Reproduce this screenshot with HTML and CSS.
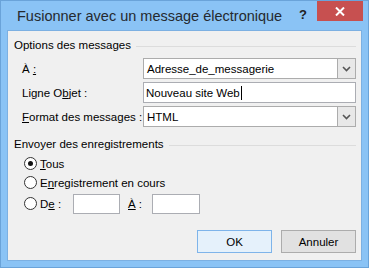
FILE: index.html
```html
<!DOCTYPE html>
<html>
<head>
  <meta charset="UTF-8">
  <title>Fusionner avec un message électronique</title>
  <link rel="stylesheet" href="styles.css">
</head>
<body>

  <div class="window">
    <div class="titlebar">
      <span class="title">Fusionner avec un message électronique</span>
      <span class="help">?</span>
      <span class="close">
        <svg width="10" height="9" viewBox="0 0 10 9"><path d="M1 0.5 L9 8.5 M9 0.5 L1 8.5" stroke="#fff" stroke-width="2"/></svg>
      </span>
    </div>

    <div class="client">
      <div class="legend"><span>Options des messages</span><span class="rule"></span></div>
      <div class="rows">
        <div class="row">
          <label class="label">À <u>:</u></label>
          <div class="combo">
            <span class="value">Adresse_de_messagerie</span>
            <span class="drop"><svg width="9" height="6" viewBox="0 0 9 6"><path d="M1 1 L4.5 4.5 L8 1" fill="none" stroke="#555" stroke-width="1.6"/></svg></span>
          </div>
        </div>
        <div class="row">
          <label class="label">Ligne O<u>b</u>jet :</label>
          <div class="textbox">Nouveau site Web<span class="caret"></span></div>
        </div>
        <div class="row">
          <label class="label"><u>F</u>ormat des messages :</label>
          <div class="combo">
            <span class="value">HTML</span>
            <span class="drop"><svg width="9" height="6" viewBox="0 0 9 6"><path d="M1 1 L4.5 4.5 L8 1" fill="none" stroke="#555" stroke-width="1.6"/></svg></span>
          </div>
        </div>
      </div>

      <div class="legend second"><span>Envoyer des enregistrements</span><span class="rule"></span></div>
      <div class="radios">
        <div class="radio-row"><span class="radio checked"></span><span><u>T</u>ous</span></div>
        <div class="radio-row"><span class="radio"></span><span>E<u>n</u>registrement en cours</span></div>
        <div class="radio-row range">
          <span class="radio"></span><span class="from-label">D<u>e</u> :</span>
          <span class="small-box"></span>
          <span class="to-label"><u>À</u> :</span>
          <span class="small-box wide"></span>
        </div>
      </div>

      <div class="buttons">
        <button class="btn default">OK</button>
        <button class="btn">Annuler</button>
      </div>
    </div>
  </div>

</body>
</html>
```

FILE: styles.css
```css
* {
  margin: 0;
  padding: 0;
  box-sizing: border-box;
}
body {
  font-family: 'Liberation Sans', Arial, sans-serif;
  font-size: 11.5px;
  color: #000;
  background: #8ac3f5;
}

.window {
  width: 369px;
  height: 268px;
  border: 1px solid #6aa3d9;
  background: #8ac3f5;
  padding: 0 6px 6px;
  display: flex;
  flex-direction: column;
}

.titlebar {
  height: 29px;
  display: flex;
  align-items: flex-start;
}
.title {
  margin-left: 10px;
  padding-top: 7px;
  font-size: 14.5px;
  line-height: 17px;
  color: #252a30;
  flex: 1;
}
.help {
  margin-top: 7px;
  margin-right: 10px;
  font-weight: bold;
  font-size: 13px;
  line-height: 14px;
  color: #222;
}
.close {
  width: 46px;
  height: 20px;
  margin-right: -1px;
  background: #c75050;
  display: flex;
  align-items: center;
  justify-content: center;
}

.client {
  flex: 1;
  border: 1px solid #7cb0e2;
  background: #f0f0f0;
  padding-top: 7px;
}

.legend {
  display: flex;
  align-items: center;
  height: 15px;
  margin-left: 6px;
  margin-right: 5px;
}
.legend span:first-child {
  line-height: 15px;
}
.rule {
  flex: 1;
  height: 1px;
  margin-left: 5px;
  margin-top: 1px;
  background: #dcdcdc;
}

.rows {
  margin-top: 5px;
  display: flex;
  flex-direction: column;
  gap: 3px;
}
.row {
  display: flex;
  align-items: center;
  height: 21px;
  padding-left: 14px;
}
.label {
  width: 121px;
}
.combo, .textbox {
  width: 213px;
  height: 21px;
  border: 1px solid #acacac;
  background: #fff;
  display: flex;
  align-items: center;
}
.textbox {
  height: 21px;
  border-color: #abadb3;
  padding-left: 2px;
}
.caret {
  width: 1px;
  height: 14px;
  background: #000;
  margin-left: 1px;
}
.value {
  flex: 1;
  padding-left: 3px;
}
.drop {
  width: 18px;
  height: 19px;
  border-left: 1px solid #acacac;
  background: #e8e8e8;
  display: flex;
  align-items: center;
  justify-content: center;
}

.legend.second {
  margin-top: 10px;
}

.radios {
  margin-top: 2px;
  padding-left: 16px;
}
.radio-row {
  display: flex;
  align-items: center;
  height: 19px;
}
.radio-row.range {
  height: 21px;
  margin-top: 1px;
}
.radio {
  width: 13px;
  height: 13px;
  border: 1px solid #333;
  border-radius: 50%;
  background: #fff;
  margin-right: 3px;
  display: flex;
  align-items: center;
  justify-content: center;
}
.radio.checked::after {
  content: "";
  width: 5px;
  height: 5px;
  border-radius: 50%;
  background: #111;
}
.from-label {
  width: 33px;
}
.small-box {
  width: 47px;
  height: 20px;
  border: 1px solid #abadb3;
  background: #fff;
}
.small-box.wide {
  width: 48px;
}
.to-label {
  width: 24px;
  margin-left: 8px;
}

.buttons {
  display: flex;
  justify-content: flex-end;
  gap: 9px;
  margin-top: 16px;
  padding-right: 5px;
}
.btn {
  width: 75px;
  height: 23px;
  font-family: 'Liberation Sans', Arial, sans-serif;
  font-size: 11.5px;
  border: 1px solid #acacac;
  background: #e1e1e1;
  color: #000;
}
.btn.default {
  border-color: #7eb4ea;
  background: #e5f1fb;
}
```
